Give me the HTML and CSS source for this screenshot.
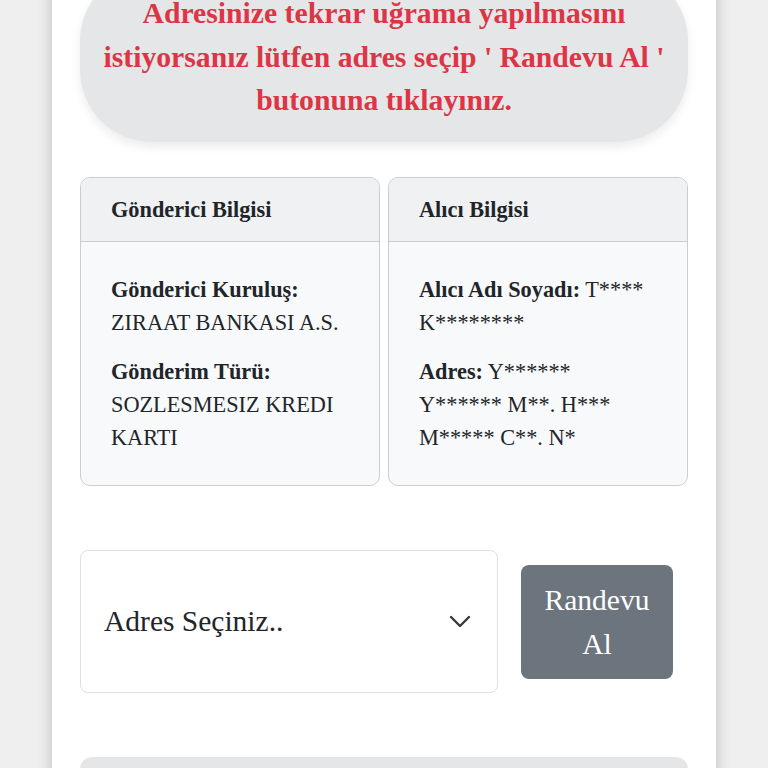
FILE: index.html
```html
<!DOCTYPE html>
<html lang="tr">
<head>
<meta charset="utf-8">
<title>Randevu</title>
<link rel="stylesheet" href="styles.css">
</head>
<body>
<div class="page">
  <div class="notice">Adresinize tekrar uğrama yapılmasını istiyorsanız lütfen adres seçip ' Randevu Al ' butonuna tıklayınız.</div>

  <div class="cards">
    <div class="card">
      <div class="card-header">Gönderici Bilgisi</div>
      <div class="card-body">
        <p><b>Gönderici Kuruluş:</b> ZIRAAT BANKASI A.S.</p>
        <p><b>Gönderim Türü:</b> SOZLESMESIZ KREDI KARTI</p>
      </div>
    </div>
    <div class="card">
      <div class="card-header">Alıcı Bilgisi</div>
      <div class="card-body">
        <p><b>Alıcı Adı Soyadı:</b> T**** K********</p>
        <p><b>Adres:</b> Y****** Y****** M**. H*** M***** C**. N*</p>
      </div>
    </div>
  </div>

  <div class="select-row">
    <div class="form-select">
      <span>Adres Seçiniz..</span>
      <svg class="chev" width="22" height="14" viewBox="0 0 22 14"><path d="M2 2 L11 11 L20 2" fill="none" stroke="#343a40" stroke-width="2.4" stroke-linecap="round" stroke-linejoin="round"/></svg>
    </div>
    <button class="btn">Randevu Al</button>
  </div>

  <div class="bottom-box"></div>
</div>
</body>
</html>
```

FILE: styles.css
```css
html, body {
  margin: 0;
  padding: 0;
}
body {
  background: #efefef;
  font-family: "Liberation Serif", "Times New Roman", serif;
  color: #212529;
  overflow: hidden;
  height: 768px;
}
.page {
  width: 608px;
  margin: 0 auto;
  padding: 0 28px 40px;
  background: #ffffff;
  box-shadow: 0 0 14px rgba(0, 0, 0, 0.22);
  min-height: 900px;
}
.notice {
  margin-top: -31px;
  background: #e5e6e8;
  border-radius: 72px;
  padding: 23px 20px 19px;
  text-align: center;
  color: #dc3545;
  font-weight: bold;
  font-size: 29.7px;
  line-height: 43.5px;
  box-shadow: 0 5px 10px rgba(0, 0, 0, 0.08);
}
.cards {
  margin-top: 35px;
  display: grid;
  grid-template-columns: 1fr 1fr;
  gap: 8px;
}
.card {
  border: 1.5px solid #cbcdcf;
  border-radius: 10px;
  background: #f8f9fa;
  overflow: hidden;
}
.card-header {
  background: #f0f1f3;
  border-bottom: 1.5px solid #cbcdcf;
  padding: 15.5px 30px 15px;
  font-weight: bold;
  font-size: 22.3px;
  line-height: 33px;
}
.card-body {
  padding: 31px 33px 15px 30px;
  font-size: 22.3px;
  line-height: 33px;
}
.card-body p {
  margin: 0 0 16px;
}
.select-row {
  margin-top: 64px;
  display: flex;
  align-items: center;
  gap: 23px;
}
.form-select {
  flex: 0 0 418px;
  box-sizing: border-box;
  height: 143px;
  border: 1.5px solid #dee0e2;
  border-radius: 8px;
  background: #ffffff;
  display: flex;
  align-items: center;
  justify-content: space-between;
  padding: 0 26px 0 23px;
  font-size: 29.5px;
}
.chev {
  display: block;
}
.btn {
  width: 152px;
  box-sizing: border-box;
  padding: 13px 20px;
  background: #6c757d;
  color: #ffffff;
  border: none;
  border-radius: 8px;
  font-family: "Liberation Serif", "Times New Roman", serif;
  font-size: 29.5px;
  line-height: 44px;
}
.bottom-box {
  margin-top: 64px;
  height: 80px;
  background: #e5e6e8;
  border-radius: 12px;
}
```
